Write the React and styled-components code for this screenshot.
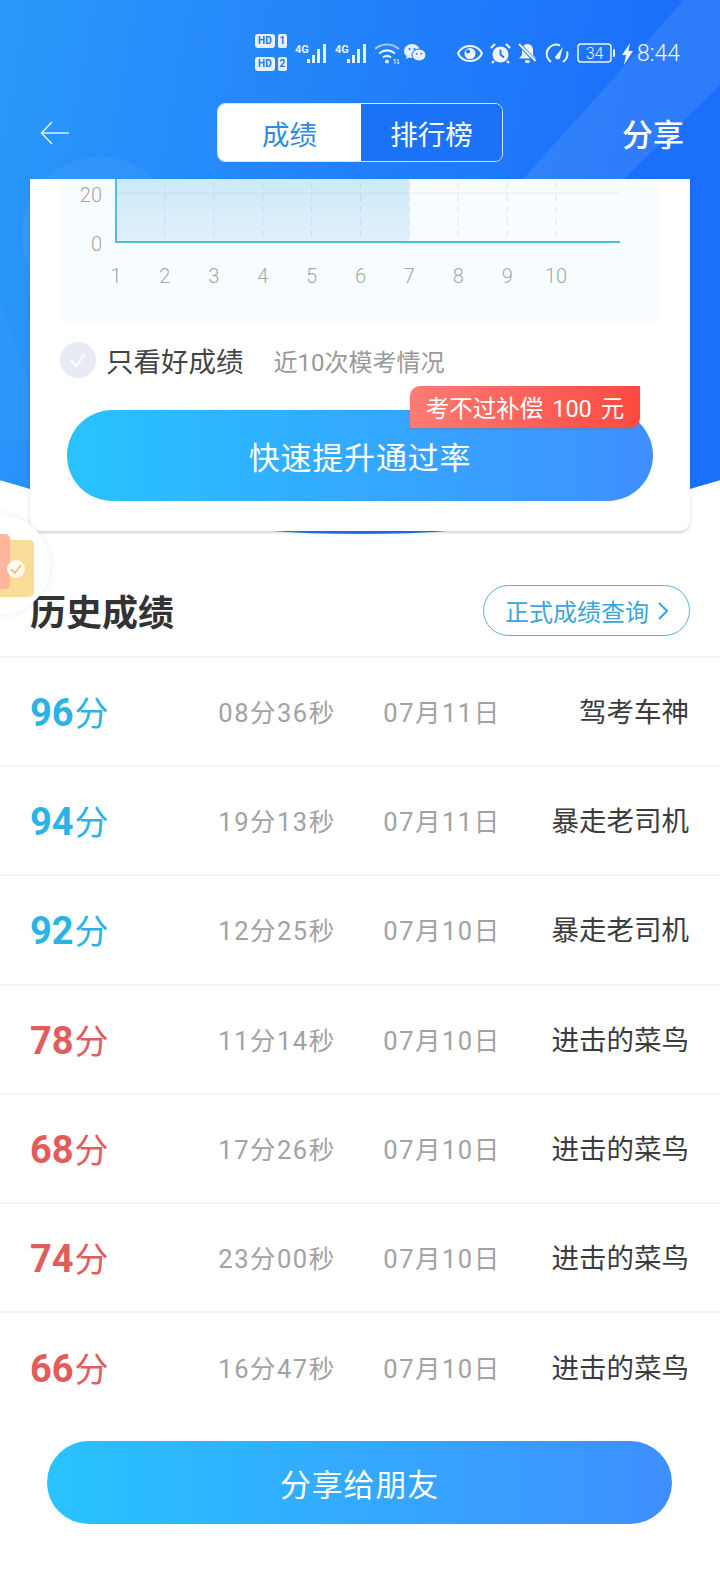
import styled, { createGlobalStyle } from "styled-components";

const FONT = `Roboto, "Noto Sans CJK SC", sans-serif`;

const GlobalStyle = createGlobalStyle`
  html, body {
    margin: 0;
    padding: 0;
    background: #fff;
    font-family: ${FONT};
  }
  * { box-sizing: border-box; }
`;

const S = {
  Page: styled.div`
    position: relative;
    width: 720px;
    height: 1584px;
    overflow: hidden;
    background: #fff;
  `,
  Hero: styled.div`
    position: absolute;
    left: -640px;
    top: -1066px;
    width: 2000px;
    height: 1600px;
    border-radius: 50%;
    overflow: hidden;
    background: linear-gradient(100deg, #2b9bf8 34%, #1b6ffb 66%);
  `,
  HeroDecor: styled.svg`
    position: absolute;
    left: 640px;
    top: 1066px;
  `,
  Content: styled.div`
    position: relative;
    display: flex;
    flex-direction: column;
  `,
  StatusBar: styled.div`
    height: 103px;
    padding: 34px 40px 0 0;
    display: flex;
    justify-content: flex-end;
    align-items: flex-start;
    color: #e6f0ff;
  `,
  HdStack: styled.div`
    display: flex;
    flex-direction: column;
    gap: 9px;
    margin-right: 8px;
  `,
  HdRow: styled.div`
    display: flex;
    align-items: center;
    gap: 3px;
  `,
  HdTag: styled.span`
    width: 20px;
    height: 14px;
    border-radius: 3px;
    background: #e6f0ff;
    color: #1b76f8;
    font-size: 10px;
    line-height: 14px;
    font-weight: 700;
    text-align: center;
  `,
  SimTag: styled.span`
    width: 9px;
    height: 14px;
    border-radius: 2px;
    background: #e6f0ff;
    color: #1b76f8;
    font-size: 10px;
    line-height: 14px;
    font-weight: 700;
    text-align: center;
  `,
  Icon: styled.svg`
    display: block;
    flex: none;
    margin-top: ${(p) => p.$top ?? 9}px;
    margin-right: ${(p) => p.$gap ?? 7}px;
  `,
  Clock: styled.span`
    margin-top: 6px;
    font-size: 23px;
    line-height: 28px;
    font-weight: 300;
    color: #eef5ff;
  `,
  Nav: styled.div`
    height: 59px;
    padding: 0 36px 0 40px;
    display: flex;
    align-items: center;
    justify-content: space-between;
  `,
  Tabs: styled.div`
    display: flex;
    width: 286px;
    height: 59px;
    margin-left: 147px;
    margin-right: 119px;
    border: 1px solid #cfe3ff;
    border-radius: 8px;
    overflow: hidden;
  `,
  Tab: styled.div`
    width: ${(p) => (p.$active ? 143 : 141)}px;
    display: flex;
    align-items: center;
    justify-content: center;
    font-size: 27.5px;
    color: ${(p) => (p.$active ? "#2f8ae0" : "#fff")};
    background: ${(p) => (p.$active ? "#fff" : "#1c72f6")};
  `,
  Share: styled.div`
    flex: none;
    font-size: 31px;
    font-weight: 500;
    color: #fff;
    white-space: nowrap;
  `,
  Card: styled.div`
    height: 352px;
    margin: 17px 30px 0;
    padding: 0 31px;
    background: #fff;
    border-radius: 0 0 10px 10px;
    box-shadow: 0 2px 3px rgba(0, 0, 0, 0.16);
  `,
  ChartPanel: styled.div`
    height: 143px;
    background: #f7fcff;
  `,
  Filter: styled.div`
    display: flex;
    align-items: center;
    height: 36px;
    margin: 20px 0 0 -1px;
  `,
  Check: styled.div`
    width: 36px;
    height: 36px;
    border-radius: 50%;
    background: #e8ebf5;
    display: flex;
    align-items: center;
    justify-content: center;
    margin-right: 10px;
  `,
  FilterLabel: styled.span`
    font-size: 27.5px;
    color: #444;
  `,
  FilterNote: styled.span`
    margin-left: 30px;
    font-size: 24px;
    color: #999;
  `,
  BoostWrap: styled.div`
    position: relative;
    margin: 32px 6px 0;
  `,
  PillButton: styled.div`
    display: flex;
    align-items: center;
    justify-content: center;
    height: ${(p) => p.$height}px;
    border-radius: ${(p) => p.$height / 2}px;
    background: linear-gradient(90deg, #28c3ff, #3f8fff);
    color: #fff;
    font-size: 31px;
    letter-spacing: 0.8px;
  `,
  Ribbon: styled.div`
    position: absolute;
    top: -24px;
    right: 13px;
    width: 230px;
    height: 42px;
    border-radius: 10px 0 10px 0;
    background: linear-gradient(90deg, #fb7c74, #fd4a40);
    color: #fff;
    font-size: 23.5px;
    word-spacing: 3px;
    display: flex;
    align-items: center;
    justify-content: center;
    white-space: pre;
    box-shadow: 0 1px 2px rgba(200, 60, 50, 0.3);
  `,
  SectionHead: styled.div`
    display: flex;
    align-items: center;
    justify-content: space-between;
    height: 127px;
    padding: 54px 30px 20px 30px;
    border-bottom: 2px solid #f4f4f4;
  `,
  SectionTitle: styled.h2`
    margin: 0 0 2px;
    font-size: 36px;
    font-weight: 700;
    color: #333;
  `,
  QueryButton: styled.div`
    width: 207px;
    height: 51px;
    border: 1px solid #56b3dc;
    border-radius: 26px;
    display: flex;
    align-items: center;
    justify-content: center;
    gap: 9px;
    font-size: 24px;
    color: #3ba5dc;
  `,
  Row: styled.div`
    display: grid;
    grid-template-columns: 161px 172px 158px 1fr;
    align-items: center;
    height: 109.2px;
    padding: 0 31px 0 30px;
    border-bottom: ${(p) => (p.$last ? "none" : "2px solid #f4f4f4")};
  `,
  Score: styled.div`
    color: ${(p) => (p.$pass ? "#2cb2e6" : "#e25c5c")};
    font-size: 34px;
    display: flex;
    align-items: baseline;
    gap: 1px;
  `,
  ScoreNum: styled.span`
    font-size: 38px;
    font-weight: 700;
  `,
  Meta: styled.div`
    padding-bottom: 2px;
    text-align: center;
    font-size: 25.5px;
    letter-spacing: 1.5px;
    color: #a2a2a2;
    white-space: nowrap;
  `,
  Rank: styled.div`
    padding-bottom: 3px;
    text-align: right;
    font-size: 27.5px;
    color: #3c3c3c;
    white-space: nowrap;
  `,
  ShareWrap: styled.div`
    margin: 19px 48px 0 47px;
  `,
  Floater: styled.div`
    position: absolute;
    left: -50px;
    top: 515px;
    width: 100px;
    height: 100px;
    border-radius: 50%;
    background: #fff;
    box-shadow: 0 0 8px rgba(0, 0, 0, 0.08);
    overflow: hidden;
  `,
  FloaterCard: styled.div`
    position: absolute;
    left: 40px;
    top: 25px;
    width: 44px;
    height: 57px;
    border-radius: 0 5px 5px 0;
    background: #f8dc97;
  `,
  FloaterTab: styled.div`
    position: absolute;
    left: 40px;
    top: 19px;
    width: 20px;
    height: 55px;
    border-radius: 0 5px 5px 0;
    background: #fdb59c;
  `,
  FloaterTick: styled.svg`
    position: absolute;
    left: 56px;
    top: 44px;
  `,
};

const records = [
  { score: 96, time: "08分36秒", date: "07月11日", rank: "驾考车神" },
  { score: 94, time: "19分13秒", date: "07月11日", rank: "暴走老司机" },
  { score: 92, time: "12分25秒", date: "07月10日", rank: "暴走老司机" },
  { score: 78, time: "11分14秒", date: "07月10日", rank: "进击的菜鸟" },
  { score: 68, time: "17分26秒", date: "07月10日", rank: "进击的菜鸟" },
  { score: 74, time: "23分00秒", date: "07月10日", rank: "进击的菜鸟" },
  { score: 66, time: "16分47秒", date: "07月10日", rank: "进击的菜鸟" },
];

const Signal = () => (
  <S.Icon $gap={7} $top={9} width="33" height="21" viewBox="0 0 33 21">
    <text x="0" y="10" fontSize="11" fontWeight="700" fill="#e6f0ff" fontFamily="Roboto">
      4G
    </text>
    <g fill="#e6f0ff">
      <rect x="12" y="16" width="3" height="4" />
      <rect x="17" y="12" width="3" height="8" />
      <rect x="22" y="6" width="3" height="14" />
      <rect x="28" y="1" width="3" height="19" />
    </g>
  </S.Icon>
);

const Wifi = () => (
  <S.Icon $gap={4} $top={9} width="25" height="21" viewBox="0 0 25 21" fill="none" stroke="#e6f0ff">
    <path d="M0 6C7 0 17 0 24 6" strokeWidth="2.200" opacity=".65" />
    <path d="M4 10.500C9 6.500 15 6.500 20 10.500" strokeWidth="2.200" />
    <path d="M8 14.500c2.500-2 5.500-2 8 0" strokeWidth="2.200" />
    <circle cx="12" cy="18.500" r="2" fill="#e6f0ff" stroke="none" />
    <path d="M20 16v5M18.500 17.500l1.500-1.500M23 16v5M23 21l1.500-1.500" strokeWidth="1" />
  </S.Icon>
);

const Wechat = () => (
  <S.Icon $gap={31} $top={10} width="22" height="18" viewBox="0 0 22 18" fill="#e6f0ff">
    <ellipse cx="8" cy="7" rx="8" ry="7" />
    <path d="M3 11l-1 4 4-2z" />
    <ellipse cx="15" cy="11" rx="7" ry="6" stroke="#1b76f8" strokeWidth="1" />
    <circle cx="5.500" cy="5" r="1.100" fill="#1b76f8" />
    <circle cx="10.500" cy="5" r="1.100" fill="#1b76f8" />
    <circle cx="12.800" cy="9.800" r="0.900" fill="#1b76f8" />
    <circle cx="17.200" cy="9.800" r="0.900" fill="#1b76f8" />
  </S.Icon>
);

const Eye = () => (
  <S.Icon $gap={7} $top={11} width="26" height="17" viewBox="0 0 26 17">
    <path d="M1 8.500C6-1.500 20-1.500 25 8.500 20 18.500 6 18.500 1 8.500z" fill="none" stroke="#eef5ff" strokeWidth="2" />
    <circle cx="13" cy="8.500" r="5.500" fill="#eef5ff" />
    <circle cx="11" cy="6.500" r="2" fill="#1b76f8" />
  </S.Icon>
);

const Alarm = () => (
  <S.Icon $gap={7} $top={9} width="21" height="21" viewBox="0 0 21 21">
    <circle cx="10.500" cy="11.500" r="8" fill="#eef5ff" />
    <path d="M10.500 6.500v5l3.500 3" fill="none" stroke="#1b76f8" strokeWidth="1.800" />
    <path d="M1 5l4-4M20 5l-4-4M4 18l-2 2M17 18l2 2" stroke="#eef5ff" strokeWidth="2.200" />
  </S.Icon>
);

const BellOff = () => (
  <S.Icon $gap={8} $top={9} width="19" height="21" viewBox="0 0 19 21">
    <path d="M9.500 1c-3.500 0-5.500 3-5.500 6v5l-3 3.500h17L15 12V7c0-3-2-6-5.500-6z" fill="#eef5ff" />
    <rect x="7" y="17" width="5" height="3" rx="1.500" fill="#eef5ff" />
    <path d="M1.500 1.500l16 17" stroke="#1b76f8" strokeWidth="3.500" />
    <path d="M1 1l16.500 17" stroke="#eef5ff" strokeWidth="1.800" />
  </S.Icon>
);

const Gauge = () => (
  <S.Icon $gap={8} $top={9} width="24" height="21" viewBox="0 0 24 21" fill="none" stroke="#eef5ff" strokeWidth="2">
    <path d="M6 19C1 15 0 8 5 4c3-2.500 7-3 10-1.500" />
    <path d="M18 19c4-3 5-7 4-10.500" />
    <path d="M10 14l8-10-3 11c-1 2.500-5.500 1-5-1z" fill="#eef5ff" stroke="none" />
  </S.Icon>
);

const Battery = () => (
  <S.Icon $gap={7} $top={9} width="38" height="20" viewBox="0 0 38 20">
    <rect x="1" y="1" width="33" height="18" rx="3" fill="none" stroke="#eef5ff" strokeWidth="1.500" />
    <text x="17.500" y="15.500" fontSize="16" textAnchor="middle" fill="#eef5ff" fontFamily="Roboto" fontWeight="300">
      34
    </text>
    <rect x="36" y="6" width="2" height="8" rx="1" fill="#eef5ff" />
  </S.Icon>
);

const Bolt = () => (
  <S.Icon $gap={4} $top={9} width="11" height="22" viewBox="0 0 11 22">
    <path d="M8 0L0 12h4l-2 10 9-14H6.500z" fill="#eef5ff" />
  </S.Icon>
);

const ticks = Array.from({ length: 10 }, (_, i) => i);
const tickX = (i) => 55 + i * 48.9;

const Chart = () => (
  <svg width="598" height="143" viewBox="0 0 598 143" style={{ display: "block" }}>
    <defs>
      <linearGradient id="area" x1="0" y1="0" x2="0" y2="1">
        <stop offset="0" stopColor="#cdeafa" />
        <stop offset="1" stopColor="#e1f1fb" />
      </linearGradient>
    </defs>
    <rect x="55" y="0" width="293" height="63" fill="url(#area)" />
    <line x1="55" y1="14" x2="559" y2="14" stroke="rgba(120, 150, 170, 0.15)" strokeWidth="1" />
    {ticks.slice(1).map((i) => (
      <line
        key={i}
        x1={tickX(i)}
        y1="3"
        x2={tickX(i)}
        y2="60"
        stroke="rgba(120, 150, 170, 0.2)"
        strokeWidth="1"
        strokeDasharray="7 5"
      />
    ))}
    <path d="M55 0V63H559" fill="none" stroke="#4dbde3" strokeWidth="2" />
    <g fontFamily="Roboto" fontSize="20" fill="#a6a6a6" fontWeight="300">
      <text x="41" y="23" textAnchor="end">20</text>
      <text x="41" y="72" textAnchor="end">0</text>
      {ticks.map((i) => (
        <text key={i} x={tickX(i)} y="104" textAnchor="middle">
          {i + 1}
        </text>
      ))}
    </g>
  </svg>
);

const HeroDecor = () => (
  <S.HeroDecor width="720" height="540" viewBox="0 0 720 540">
    <circle cx="100" cy="235" r="78" fill="#fff" opacity="0.05" />
    <path d="M523 179L684 0H720V85L624 179z" fill="#fff" opacity="0.09" />
    <path d="M0 300L28 380V440H0z" fill="#fff" opacity="0.03" />
  </S.HeroDecor>
);

export default function App() {
  return (
    <>
      <GlobalStyle />
      <S.Page>
        <S.Hero>
          <HeroDecor />
        </S.Hero>
        <S.Content>
          <S.StatusBar>
            <S.HdStack>
              <S.HdRow>
                <S.HdTag>HD</S.HdTag>
                <S.SimTag>1</S.SimTag>
              </S.HdRow>
              <S.HdRow>
                <S.HdTag>HD</S.HdTag>
                <S.SimTag>2</S.SimTag>
              </S.HdRow>
            </S.HdStack>
            <Signal />
            <Signal />
            <Wifi />
            <Wechat />
            <Eye />
            <Alarm />
            <BellOff />
            <Gauge />
            <Battery />
            <Bolt />
            <S.Clock>8:44</S.Clock>
          </S.StatusBar>
          <S.Nav>
            <svg width="30" height="24" viewBox="0 0 30 24" fill="none" stroke="#dcebff" strokeWidth="1.600">
              <path d="M29 12H2M12 1L1.500 12 12 23" />
            </svg>
            <S.Tabs>
              <S.Tab $active>成绩</S.Tab>
              <S.Tab>排行榜</S.Tab>
            </S.Tabs>
            <S.Share>分享</S.Share>
          </S.Nav>
          <S.Card>
            <S.ChartPanel>
              <Chart />
            </S.ChartPanel>
            <S.Filter>
              <S.Check>
                <svg width="18" height="16" viewBox="0 0 18 16" fill="none" stroke="#fff" strokeWidth="2">
                  <path d="M2 8l5 6L16 2" />
                </svg>
              </S.Check>
              <S.FilterLabel>只看好成绩</S.FilterLabel>
              <S.FilterNote>近10次模考情况</S.FilterNote>
            </S.Filter>
            <S.BoostWrap>
              <S.PillButton $height={91}>快速提升通过率</S.PillButton>
              <S.Ribbon>考不过补偿 100 元</S.Ribbon>
            </S.BoostWrap>
          </S.Card>
          <S.SectionHead>
            <S.SectionTitle>历史成绩</S.SectionTitle>
            <S.QueryButton>
              正式成绩查询
              <svg width="10" height="18" viewBox="0 0 10 18" fill="none" stroke="#3ba5dc" strokeWidth="2">
                <path d="M1 1l8 8-8 8" />
              </svg>
            </S.QueryButton>
          </S.SectionHead>
          {records.map((r, i) => (
            <S.Row key={i} $last={i === records.length - 1}>
              <S.Score $pass={r.score >= 90}>
                <S.ScoreNum>{r.score}</S.ScoreNum>分
              </S.Score>
              <S.Meta>{r.time}</S.Meta>
              <S.Meta>{r.date}</S.Meta>
              <S.Rank>{r.rank}</S.Rank>
            </S.Row>
          ))}
          <S.ShareWrap>
            <S.PillButton $height={83}>分享给朋友</S.PillButton>
          </S.ShareWrap>
        </S.Content>
        <S.Floater>
          <S.FloaterCard />
          <S.FloaterTab />
          <S.FloaterTick width="20" height="20" viewBox="0 0 20 20">
            <circle cx="10" cy="10" r="9" fill="#fff" opacity="0.85" />
            <path d="M5 10l4 4 6-8" fill="none" stroke="#e9c878" strokeWidth="2" />
          </S.FloaterTick>
        </S.Floater>
      </S.Page>
    </>
  );
}
